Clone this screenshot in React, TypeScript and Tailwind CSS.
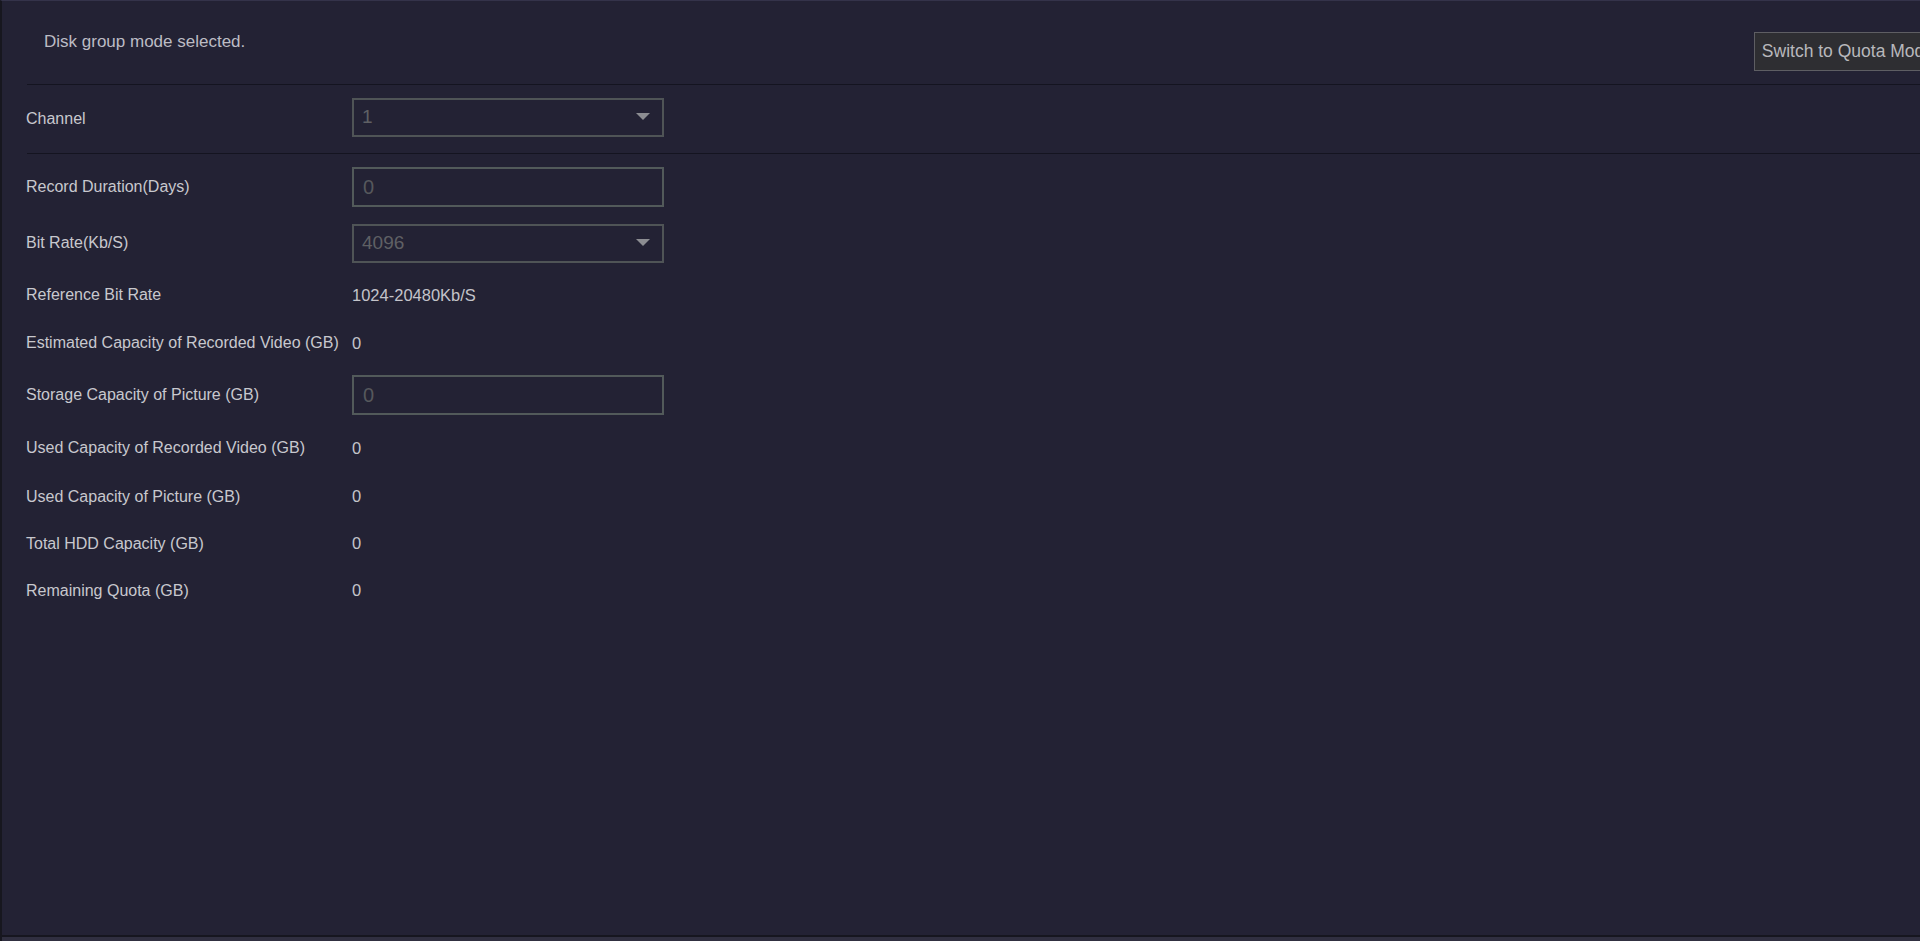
import React from "react";

const FONT = { fontFamily: '"Liberation Sans", Arial, sans-serif' };

type Row =
  | { kind: "input"; label: string; value: string }
  | { kind: "select"; label: string; value: string }
  | { kind: "text"; label: string; value: string; h?: string };

const ROWS: Row[] = [
  { kind: "input", label: "Record Duration(Days)", value: "0" },
  { kind: "select", label: "Bit Rate(Kb/S)", value: "4096" },
  { kind: "text", label: "Reference Bit Rate", value: "1024-20480Kb/S" },
  { kind: "text", label: "Estimated Capacity of Recorded Video (GB)", value: "0" },
  { kind: "input", label: "Storage Capacity of Picture (GB)", value: "0" },
  { kind: "text", label: "Used Capacity of Recorded Video (GB)", value: "0", h: "h-[50px]" },
  { kind: "text", label: "Used Capacity of Picture (GB)", value: "0", h: "h-[47px]" },
  { kind: "text", label: "Total HDD Capacity (GB)", value: "0", h: "h-[47px]" },
  { kind: "text", label: "Remaining Quota (GB)", value: "0", h: "h-[47px]" },
];

function SelectBox({ value }: { value: string }) {
  return (
    <div className="flex items-center justify-between w-[312px] h-[39px] border-2 border-[#4f5456] pl-[8px] pr-[12px]">
      <span className="text-[19px] text-[#5f6064]">{value}</span>
      <svg width="14" height="8" viewBox="0 0 14 8">
        <path d="M0 0 L14 0 L7 7 Z" fill="#8c8d92" />
      </svg>
    </div>
  );
}

function InputBox({ value }: { value: string }) {
  return (
    <div className="flex items-center w-[312px] h-[40px] border-2 border-[#525a5a] pl-[9px]">
      <span className="text-[20px] text-[#56585c]">{value}</span>
    </div>
  );
}

export default function App() {
  return (
    <div
      style={FONT}
      className="h-[941px] w-full overflow-hidden bg-[#232234] flex flex-col border-t border-[#34334a] border-l-2 border-l-[#17171f]"
    >
      <div className="flex-1 flex flex-col">
        {/* Header */}
        <div className="h-[83px] flex items-start justify-between pt-[31px] pl-[42px]">
          <p className="text-[17px] leading-[18px] mt-[1px] text-[#bcbcc4]">Disk group mode selected.</p>
          <button className="h-[39px] -mr-[27px] pl-[7px] pr-[12px] bg-[#2e2e32] border border-[#5e5e63] text-[17.5px] text-[#b8b8bc] whitespace-nowrap">
            Switch to Quota Mode
          </button>
        </div>

        <div className="ml-[25px] h-px bg-[#141420]" />

        {/* Channel */}
        <div className="h-[68px] flex items-center pl-[24px]">
          <span className="w-[326px] text-[16px] text-[#c8c8ce]">Channel</span>
          <div className="-mt-[4px]">
            <SelectBox value="1" />
          </div>
        </div>

        <div className="ml-[25px] h-px bg-[#141420]" />

        {/* Fields */}
        <div className="pt-[5px] pl-[24px] flex flex-col">
          {ROWS.map((row) => (
            <div
              key={row.label}
              className={`flex items-center ${
                row.kind === "text" ? row.h ?? "h-[48px]" : "h-[56px]"
              }`}
            >
              <span className="w-[326px] text-[16px] text-[#c8c8ce] whitespace-nowrap">{row.label}</span>
              {row.kind === "input" && <InputBox value={row.value} />}
              {row.kind === "select" && <SelectBox value={row.value} />}
              {row.kind === "text" && (
                <span className="text-[16.5px] text-[#c4c4ca]">{row.value}</span>
              )}
            </div>
          ))}
        </div>
      </div>

      <div className="h-[2px] bg-[#16161f]" />
      <div className="h-[4px] bg-[#302f40]" />
    </div>
  );
}
